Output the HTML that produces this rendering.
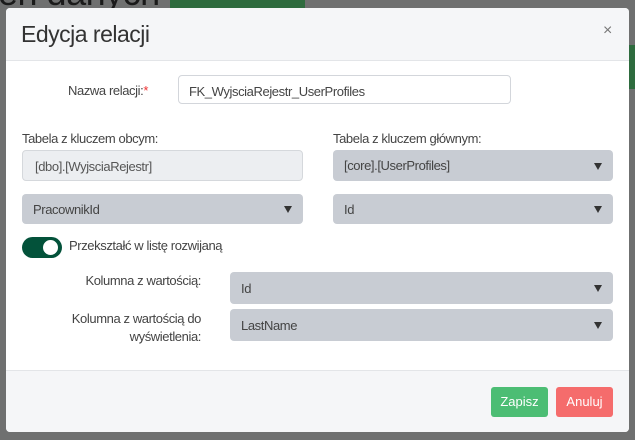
<!DOCTYPE html>
<html><head><meta charset="utf-8"><style>
*{box-sizing:border-box;margin:0;padding:0}
body{width:635px;height:440px;overflow:hidden;background:#6f7070;font-family:"Liberation Sans",sans-serif;position:relative;color:#444}
.a{position:absolute}
.t{font-size:13px;letter-spacing:-0.4px;white-space:nowrap}
.sel{position:absolute;background:#c8ccd3;border-radius:4px;font-size:13px;letter-spacing:-0.4px;color:#444;padding-left:11px;display:flex;align-items:center}
.sel:after{content:"";position:absolute;right:11px;top:50%;margin-top:-3px;border-left:4px solid transparent;border-right:4px solid transparent;border-top:7px solid #333}
</style></head><body>
<div class="a" style="left:0;top:0;width:360px;height:8px;overflow:hidden"><div class="a" style="left:-2px;top:-28px;font-size:36px;color:#1a1a1a;letter-spacing:-0.5px">en danych</div></div>
<div class="a" style="left:170px;top:0;width:135px;height:8px;background:#2e6b3e"></div>
<div class="a" style="left:628px;top:45px;width:7px;height:44px;background:#2e6b3e"></div>
<div class="a" style="left:6px;top:8px;width:623px;height:424px;background:#fff;border-radius:4px;overflow:hidden">
 <div class="a" style="left:0;top:0;width:623px;height:53px;background:#f5f6f8;border-bottom:1px solid #e3e5e8"></div>
 <div class="a" style="left:15px;top:13px;font-size:23px;color:#333;letter-spacing:-0.5px">Edycja relacji</div>
 <div class="a" style="left:597px;top:14px;font-size:16px;color:#777">×</div>
 <div class="a" style="left:0;top:362px;width:623px;height:62px;background:#f5f6f8;border-top:1px solid #e3e5e8"></div>
</div>
<div class="a t" style="right:487px;top:83px">Nazwa relacji:<span style="color:#e33">*</span></div>
<div class="a t" style="left:178px;top:75px;width:333px;height:29px;border:1px solid #d3d6db;border-radius:4px;padding:8px 0 0 10px;color:#444">FK_WyjsciaRejestr_UserProfiles</div>
<div class="a t" style="left:22px;top:131px">Tabela z kluczem obcym:</div>
<div class="a t" style="left:333px;top:131px">Tabela z kluczem głównym:</div>
<div class="a t" style="left:22px;top:150px;width:281px;height:31px;background:#eceef1;border:1px solid #d5d8dc;border-radius:4px;padding:8px 0 0 12px;color:#555">[dbo].[WyjsciaRejestr]</div>
<div class="sel" style="left:333px;top:150px;width:280px;height:31px">[core].[UserProfiles]</div>
<div class="sel" style="left:22px;top:194px;width:281px;height:30px">PracownikId</div>
<div class="sel" style="left:333px;top:194px;width:280px;height:30px">Id</div>
<div class="a" style="left:22px;top:237px;width:40px;height:21px;border-radius:11px;background:#03523a"><div class="a" style="left:21px;top:3px;width:15px;height:15px;border-radius:50%;background:#fff"></div></div>
<div class="a t" style="left:69px;top:238px">Przekształć w listę rozwijaną</div>
<div class="a t" style="right:434px;top:273px">Kolumna z wartością:</div>
<div class="a t" style="right:434px;top:310px;text-align:right;line-height:18px">Kolumna z wartością do<br>wyświetlenia:</div>
<div class="sel" style="left:230px;top:272px;width:383px;height:32px">Id</div>
<div class="sel" style="left:230px;top:309px;width:383px;height:32px">LastName</div>
<div class="a" style="left:491px;top:387px;width:57px;height:30px;background:#4cbd74;border-radius:3px;color:#fff;font-size:13px;text-align:center;line-height:30px">Zapisz</div>
<div class="a" style="left:556px;top:387px;width:57px;height:30px;background:#f56c6c;border-radius:3px;color:#fff;font-size:13px;text-align:center;line-height:30px">Anuluj</div>
</body></html>
